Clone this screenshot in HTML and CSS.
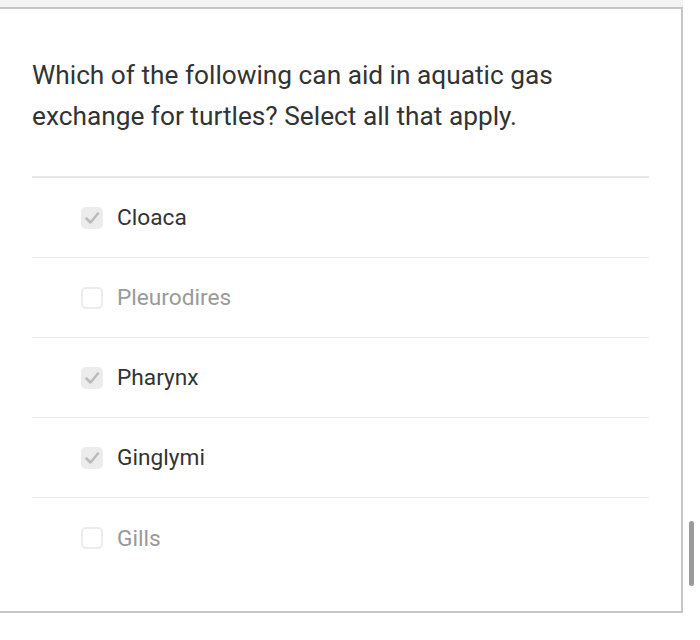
FILE: index.html
```html
<!DOCTYPE html>
<html>
<head>
<meta charset="utf-8">
<link rel="stylesheet" href="styles.css">
</head>
<body>
<div class="topstrip"></div>
<div class="card">
  <div class="question">Which of the following can aid in aquatic gas exchange for turtles? Select all that apply.</div>
  <div class="options">
    <div class="option checked">
      <span class="box"><svg viewBox="0 0 22 22" width="22" height="22"><path d="M5.5 11.5 L9.5 15.5 L17 6.5" fill="none" stroke="#bababa" stroke-width="2.5" stroke-linecap="round" stroke-linejoin="round"/></svg></span>
      <span class="label">Cloaca</span>
    </div>
    <div class="option">
      <span class="box"></span>
      <span class="label">Pleurodires</span>
    </div>
    <div class="option checked">
      <span class="box"><svg viewBox="0 0 22 22" width="22" height="22"><path d="M5.5 11.5 L9.5 15.5 L17 6.5" fill="none" stroke="#bababa" stroke-width="2.5" stroke-linecap="round" stroke-linejoin="round"/></svg></span>
      <span class="label">Pharynx</span>
    </div>
    <div class="option checked">
      <span class="box"><svg viewBox="0 0 22 22" width="22" height="22"><path d="M5.5 11.5 L9.5 15.5 L17 6.5" fill="none" stroke="#bababa" stroke-width="2.5" stroke-linecap="round" stroke-linejoin="round"/></svg></span>
      <span class="label">Ginglymi</span>
    </div>
    <div class="option last">
      <span class="box"></span>
      <span class="label">Gills</span>
    </div>
  </div>
</div>
<div class="scrollbar"></div>
</body>
</html>
```

FILE: styles.css
```css
html, body {
  margin: 0;
  padding: 0;
  background: #ffffff;
  font-family: Roboto, "Liberation Sans", sans-serif;
}
body {
  width: 700px;
  height: 640px;
  overflow: hidden;
  position: relative;
}
.topstrip {
  height: 7px;
  width: 683px;
  background: #f3f3f3;
}
.card {
  width: 683px;
  box-sizing: border-box;
  border-top: 2px solid #c6c6c6;
  border-right: 2px solid #c6c6c6;
  border-bottom: 2px solid #c6c6c6;
  background: #fff;
  padding: 46px 33px 0 32px;
  height: 606px;
}
.question {
  font-size: 26.25px;
  line-height: 41px;
  color: #333333;
  padding-bottom: 39px;
  border-bottom: 2px solid #e8e8e8;
  width: 617px;
}
.options {
  width: 617px;
}
.option {
  height: 80px;
  box-sizing: border-box;
  border-bottom: 1px solid #ececec;
  display: flex;
  align-items: center;
  padding-left: 49px;
  gap: 14px;
}
.option.last {
  border-bottom: none;
}
.box {
  width: 22px;
  height: 22px;
  box-sizing: border-box;
  border: 2px solid #ececec;
  border-radius: 5px;
  background: #fff;
  display: flex;
  align-items: center;
  justify-content: center;
}
.option.checked .box {
  background: #ececec;
  border-color: #ececec;
}
.box svg {
  display: block;
  flex: none;
}
.label {
  font-size: 22.7px;
  color: #9a9a9a;
}
.option.checked .label {
  color: #333333;
}
.scrollbar {
  position: absolute;
  left: 689px;
  top: 521px;
  width: 5px;
  height: 65px;
  border-radius: 3px;
  background: #9a9a9a;
}
```
